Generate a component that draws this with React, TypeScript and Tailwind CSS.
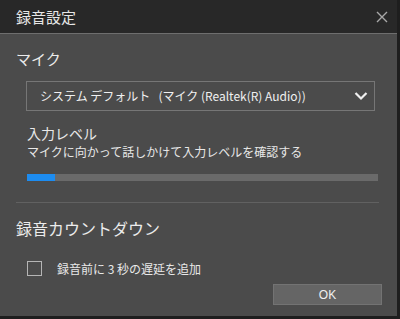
import React from "react";

const font = { fontFamily: '"Noto Sans CJK JP", "Noto Sans", sans-serif' };

export default function App() {
  return (
    <div className="w-[400px] h-[319px] bg-[#1e1e1e] overflow-hidden" style={font}>
      <div className="w-[397px] h-[316px] flex flex-col bg-[#4b4b4b]">
        <div className="h-[34px] shrink-0 bg-[#282828] flex items-center justify-between pl-[16px] pr-[9px] border-b border-[#6e6e6e]">
          <span className="text-[15px] text-[#e6e6e6] leading-none">録音設定</span>
          <svg width="12" height="12" viewBox="0 0 12 12">
            <path d="M1 1 L11 11 M11 1 L1 11" stroke="#a8a8a8" strokeWidth="1.4" />
          </svg>
        </div>
        <div className="flex flex-col pl-[16px] pr-[18px]">
          <div className="mt-[15px] text-[15px] leading-[20px] text-[#ececec]">マイク</div>
          <div className="mt-[12px] ml-[10px] mr-[4px] h-[30px] border border-[#767676] flex items-center justify-between pl-[13px] pr-[6px]">
            <span className="text-[12px] text-[#f0f0f0] leading-none whitespace-pre">システム デフォルト   (マイク (Realtek(R) Audio))</span>
            <svg width="14" height="10" viewBox="0 0 14 10">
              <path d="M1.5 2 L7 7.5 L12.5 2" stroke="#f0f0f0" strokeWidth="2.2" fill="none" />
            </svg>
          </div>
          <div className="ml-[11px] mt-[13px] text-[14px] leading-[18px] text-[#e8e8e8]">入力レベル</div>
          <div className="ml-[11px] mt-[2px] text-[12px] leading-[16px] text-[#e8e8e8]">マイクに向かって話しかけて入力レベルを確認する</div>
          <div className="ml-[11px] mr-[1px] mt-[14px] h-[7px] bg-[#6a6a6a] flex">
            <div className="w-[28px] h-full bg-[#1d8cf0]" />
          </div>
          <div className="mt-[21px] h-px bg-[#616161]" />
          <div className="mt-[15px] text-[16px] leading-[20px] text-[#ececec]">録音カウントダウン</div>
          <div className="mt-[23px] ml-[11px] flex items-center">
            <div className="w-[15px] h-[15px] border border-[#b5b5b5]" />
            <span className="ml-[15px] text-[12px] leading-none text-[#e8e8e8] whitespace-pre">録音前に 3 秒の遅延を追加</span>
          </div>
          <div className="flex justify-end -mr-[3px] mt-[8px]">
            <div className="w-[109px] h-[21px] bg-[#656565] border border-[#737373] flex items-center justify-center text-[12px] text-[#f0f0f0]" style={{ fontFamily: '"Liberation Sans", sans-serif' }}>
              OK
            </div>
          </div>
        </div>
      </div>
    </div>
  );
}
